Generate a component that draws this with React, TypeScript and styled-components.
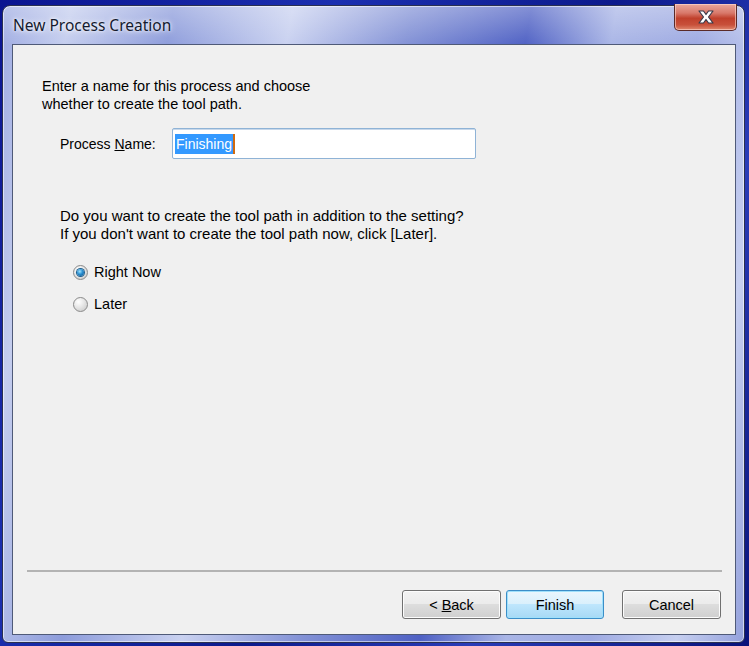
import React from "react";
import styled, { createGlobalStyle } from "styled-components";

const Global = createGlobalStyle`
  html, body { margin: 0; padding: 0; }
  body {
    width: 749px;
    height: 646px;
    overflow: hidden;
    background: linear-gradient(120deg, #0a1490 0%, #1b2fb0 30%, #0c1a8c 55%, #2a3cb8 75%, #08127a 100%);
    font-family: "Liberation Sans", Arial, sans-serif;
  }
`;

const Desktop = styled.div`
  width: 749px;
  height: 646px;
  padding: 5px 4px 3px 2px;
  box-sizing: border-box;
  display: flex;
`;

const Window = styled.div`
  flex: 1;
  display: flex;
  flex-direction: column;
  border: 1px solid #2a3050;
  border-radius: 8px 8px 6px 6px;
  box-sizing: border-box;
  background:
    linear-gradient(180deg, rgba(255,255,255,0.3) 0px, rgba(255,255,255,0) 40px),
    linear-gradient(100deg, #9eabe2 0%, #c4cdee 8%, #8d9cdb 20%, #c9d1f0 34%, #8392d6 48%, #4f61c4 62%, #a9b5e6 72%, #9eaae2 82%, #c6cff0 92%, #94a1dc 100%);
  box-shadow: inset 0 0 0 1px rgba(255,255,255,0.55);
`;

const TitleBar = styled.div`
  height: 38px;
  display: flex;
  align-items: flex-start;
  justify-content: space-between;
  padding: 0 7px 0 10px;
`;

const Title = styled.div`
  font-family: "Noto Sans", "Open Sans", sans-serif;
  font-size: 15.5px;
  color: #141a2e;
  margin-top: 8px;
  text-shadow: 0 0 6px rgba(255,255,255,0.95), 0 0 3px rgba(255,255,255,0.9);
`;

const CloseButton = styled.div`
  width: 63px;
  height: 27px;
  margin-top: -2px;
  border: 1px solid #5a2a28;
  border-top: none;
  border-radius: 0 0 5px 5px;
  box-sizing: border-box;
  display: flex;
  align-items: center;
  justify-content: center;
  background: linear-gradient(180deg, #e9a89c 0%, #d8786a 35%, #c0402c 55%, #c8503a 80%, #e08a70 100%);
  box-shadow: inset 0 0 0 1px rgba(255,220,210,0.6);
`;

const Client = styled.div`
  flex: 1;
  margin: 0 8px 7px 9px;
  background: #f0f0f0;
  border: 1px solid #4f5a78;
  display: flex;
  flex-direction: column;
  color: #000;
  font-size: 14.5px;
`;

const Body = styled.div`
  flex: 1;
  padding: 32px 0 0 29px;
  display: flex;
  flex-direction: column;
`;

const Paragraph = styled.p`
  margin: 0;
  line-height: 18px;
`;

const NameRow = styled.div`
  display: flex;
  align-items: center;
  margin-top: 15px;
  padding-left: 18px;
`;

const Label = styled.label`
  width: 112px;
  padding-top: 1px;
  font-size: 14px;
`;

const TextBox = styled.div`
  width: 304px;
  height: 31px;
  box-sizing: border-box;
  border: 1px solid #8fb3d6;
  border-radius: 2px;
  background: #fff;
  display: flex;
  align-items: center;
  padding-left: 2px;
  font-size: 14px;
  box-shadow: inset 0 1px 0 #c8d8ea;
`;

const Selected = styled.span`
  background: #3399ff;
  color: #fff;
  padding: 2px 1px 2px 1px;
  border-right: 2px solid #d06a10;
`;

const Question = styled.div`
  margin-top: 48px;
  padding-left: 18px;
  font-size: 15px;
`;

const RadioGroup = styled.div`
  display: flex;
  flex-direction: column;
  gap: 14px;
  margin-top: 20px;
  padding-left: 31px;
  font-size: 14.5px;
`;

const RadioRow = styled.label`
  display: flex;
  align-items: center;
  gap: 6px;
  height: 18px;
`;

const RadioCircle = styled.span<{ $checked?: boolean }>`
  width: 15px;
  height: 15px;
  border-radius: 50%;
  box-sizing: border-box;
  border: 1px solid #8a8a8a;
  background: radial-gradient(circle at 35% 30%, #ffffff 0%, #e6e6e6 45%, #c4c4c4 100%);
  display: flex;
  align-items: center;
  justify-content: center;
  &::after {
    content: "";
    display: ${(p) => (p.$checked ? "block" : "none")};
    width: 7px;
    height: 7px;
    border-radius: 50%;
    background: radial-gradient(circle at 40% 35%, #9fe3ff 0%, #2a8fd0 45%, #0b4f8a 100%);
    box-shadow: 0 0 0 1px #1d5f8e;
  }
`;

const Separator = styled.div`
  margin: 0 13px 0 14px;
  height: 0;
  border-top: 2px solid #b3b3b3;
`;

const ButtonRow = styled.div`
  display: flex;
  justify-content: flex-end;
  padding: 18px 14px 15px 0;
`;

const Button = styled.div<{ $default?: boolean; $gap?: number }>`
  width: ${(p) => (p.$default ? 98 : 99)}px;
  height: 29px;
  box-sizing: border-box;
  margin-left: ${(p) => p.$gap ?? 0}px;
  border: 1px solid ${(p) => (p.$default ? "#3c8ec8" : "#707070")};
  border-radius: 3px;
  display: flex;
  align-items: center;
  justify-content: center;
  font-size: 14.5px;
  color: #000;
  background: ${(p) =>
    p.$default
      ? "linear-gradient(180deg, #eaf6fd 0%, #d9f0fc 49%, #bee6fd 50%, #a7d9f5 100%)"
      : "linear-gradient(180deg, #f2f2f2 0%, #ebebeb 49%, #dddddd 50%, #cfcfcf 100%)"};
  box-shadow: inset 0 0 0 1px ${(p) => (p.$default ? "#9fe0fb" : "#fcfcfc")};
`;

const U = styled.span`
  text-decoration: underline;
`;

const CloseIcon = () => (
  <svg width="18" height="14" viewBox="0 0 18 14">
    <path
      d="M2 1 L6.5 1 L9 4.5 L11.5 1 L16 1 L11.5 7 L16 13 L11.5 13 L9 9.5 L6.5 13 L2 13 L6.5 7 Z"
      fill="#ffffff"
      stroke="#3a3a4a"
      strokeWidth="1.2"
      strokeLinejoin="round"
    />
  </svg>
);

export default function App() {
  return (
    <>
      <Global />
      <Desktop>
        <Window>
          <TitleBar>
            <Title>New Process Creation</Title>
            <CloseButton>
              <CloseIcon />
            </CloseButton>
          </TitleBar>
          <Client>
            <Body>
              <Paragraph>Enter a name for this process and choose</Paragraph>
              <Paragraph>whether to create the tool path.</Paragraph>
              <NameRow>
                <Label>
                  Process <U>N</U>ame:
                </Label>
                <TextBox>
                  <Selected>Finishing</Selected>
                </TextBox>
              </NameRow>
              <Question>
                <Paragraph>Do you want to create the tool path in addition to the setting?</Paragraph>
                <Paragraph>If you don't want to create the tool path now, click [Later].</Paragraph>
              </Question>
              <RadioGroup>
                <RadioRow>
                  <RadioCircle $checked />
                  Right Now
                </RadioRow>
                <RadioRow>
                  <RadioCircle />
                  Later
                </RadioRow>
              </RadioGroup>
            </Body>
            <Separator />
            <ButtonRow>
              <Button>
                &lt;&nbsp;<U>B</U>ack
              </Button>
              <Button $default $gap={5}>Finish</Button>
              <Button $gap={18}>Cancel</Button>
            </ButtonRow>
          </Client>
        </Window>
      </Desktop>
    </>
  );
}
